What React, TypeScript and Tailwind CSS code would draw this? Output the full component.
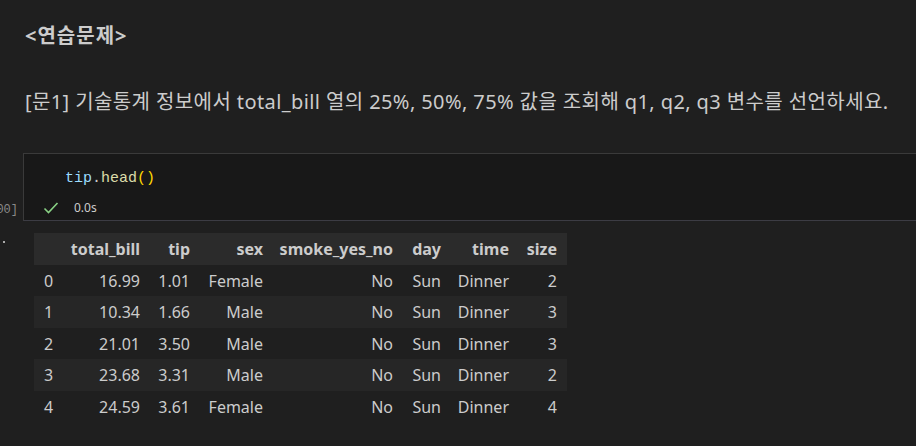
import React from "react";

interface Row {
  idx: number;
  total_bill: string;
  tip: string;
  sex: string;
  smoke: string;
  day: string;
  time: string;
  size: number;
}

const rows: Row[] = [
  { idx: 0, total_bill: "16.99", tip: "1.01", sex: "Female", smoke: "No", day: "Sun", time: "Dinner", size: 2 },
  { idx: 1, total_bill: "10.34", tip: "1.66", sex: "Male", smoke: "No", day: "Sun", time: "Dinner", size: 3 },
  { idx: 2, total_bill: "21.01", tip: "3.50", sex: "Male", smoke: "No", day: "Sun", time: "Dinner", size: 3 },
  { idx: 3, total_bill: "23.68", tip: "3.31", sex: "Male", smoke: "No", day: "Sun", time: "Dinner", size: 2 },
  { idx: 4, total_bill: "24.59", tip: "3.61", sex: "Female", smoke: "No", day: "Sun", time: "Dinner", size: 4 },
];

const sans = "font-['Noto_Sans','Noto_Sans_CJK_KR',sans-serif]";

export default function App() {
  return (
    <main className={`w-[916px] h-[446px] overflow-hidden bg-[#1f1f1f] text-[#cccccc] ${sans}`}>
      {/* markdown */}
      <div className="pl-[25px] pt-[22px]">
        <h3 className="text-[20px] tracking-[1px] font-bold leading-[28px] text-[#cccccc] whitespace-nowrap">
          &lt;연습문제&gt;
        </h3>
        <p className="mt-[38px] text-[20px] tracking-[0.4px] leading-[28px] whitespace-nowrap">
          [문1] 기술통계 정보에서 total_bill 열의 25%, 50%, 75% 값을 조회해 q1, q2, q3 변수를 선언하세요.
        </p>
      </div>

      {/* code cell */}
      <div className="mt-[37px] flex">
        <div className="w-[23px] shrink-0 overflow-hidden flex items-end justify-end pb-[4px] pr-[5px]">
          <span className="shrink-0 font-['Liberation_Mono',monospace] text-[12px] leading-[14px] text-[#8a8a8a] whitespace-nowrap">
            [100]
          </span>
        </div>
        <div className="flex-1 h-[68px] bg-[#181818] border-t border-l border-b border-t-[#3a3a3a] border-l-[#3a3a3a] border-b-[#3c3c44]">
          <div className="pl-[41px] pt-[15px] font-['Liberation_Mono',monospace] text-[15px] leading-[20px]">
            <span className="text-[#9cdcfe]">tip</span>
            <span className="text-[#cccccc]">.</span>
            <span className="text-[#dcdcaa]">head</span>
            <span className="text-[#ffd700]">()</span>
          </div>
          <div className="mt-[10px] flex items-center pl-[19px]">
            <svg width="16" height="14" viewBox="0 0 16 14" fill="none">
              <path d="M1.5 7.5 L5.5 11.5 L14.5 2" stroke="#89d185" strokeWidth="1.6" />
            </svg>
            <span className="ml-[15px] text-[12px] text-[#cccccc]">0.0s</span>
          </div>
        </div>
      </div>

      {/* output */}
      <div className="flex mt-[12px]">
        <div className="w-[34px] shrink-0 relative">
          <span className="absolute left-[3px] top-[8px] w-[2px] h-[2px] bg-[#aaaaaa]" />
        </div>
        <table className="border-collapse text-[16px] text-[#cccccc]">
          <thead>
            <tr className="h-[32px] bg-[#2b2b2b] font-bold">
              <th className="w-[28px]" />
              <th className="w-[88px] pr-[10px] text-right">total_bill</th>
              <th className="w-[50px] pr-[10px] text-right">tip</th>
              <th className="w-[73px] pr-[10px] text-right">sex</th>
              <th className="w-[130px] pr-[10px] text-right">smoke_yes_no</th>
              <th className="w-[48px] pr-[10px] text-right">day</th>
              <th className="w-[68px] pr-[10px] text-right">time</th>
              <th className="w-[48px] pr-[10px] text-right">size</th>
            </tr>
          </thead>
          <tbody>
            {rows.map((r) => (
              <tr
                key={r.idx}
                className={r.idx % 2 === 1 ? "h-[32px] bg-[#262626]" : "h-[31px]"}
              >
                <td className="pl-[10px] text-left">{r.idx}</td>
                <td className="pr-[10px] text-right">{r.total_bill}</td>
                <td className="pr-[10px] text-right">{r.tip}</td>
                <td className="pr-[10px] text-right">{r.sex}</td>
                <td className="pr-[10px] text-right">{r.smoke}</td>
                <td className="pr-[10px] text-right">{r.day}</td>
                <td className="pr-[10px] text-right">{r.time}</td>
                <td className="pr-[10px] text-right">{r.size}</td>
              </tr>
            ))}
          </tbody>
        </table>
      </div>
    </main>
  );
}
